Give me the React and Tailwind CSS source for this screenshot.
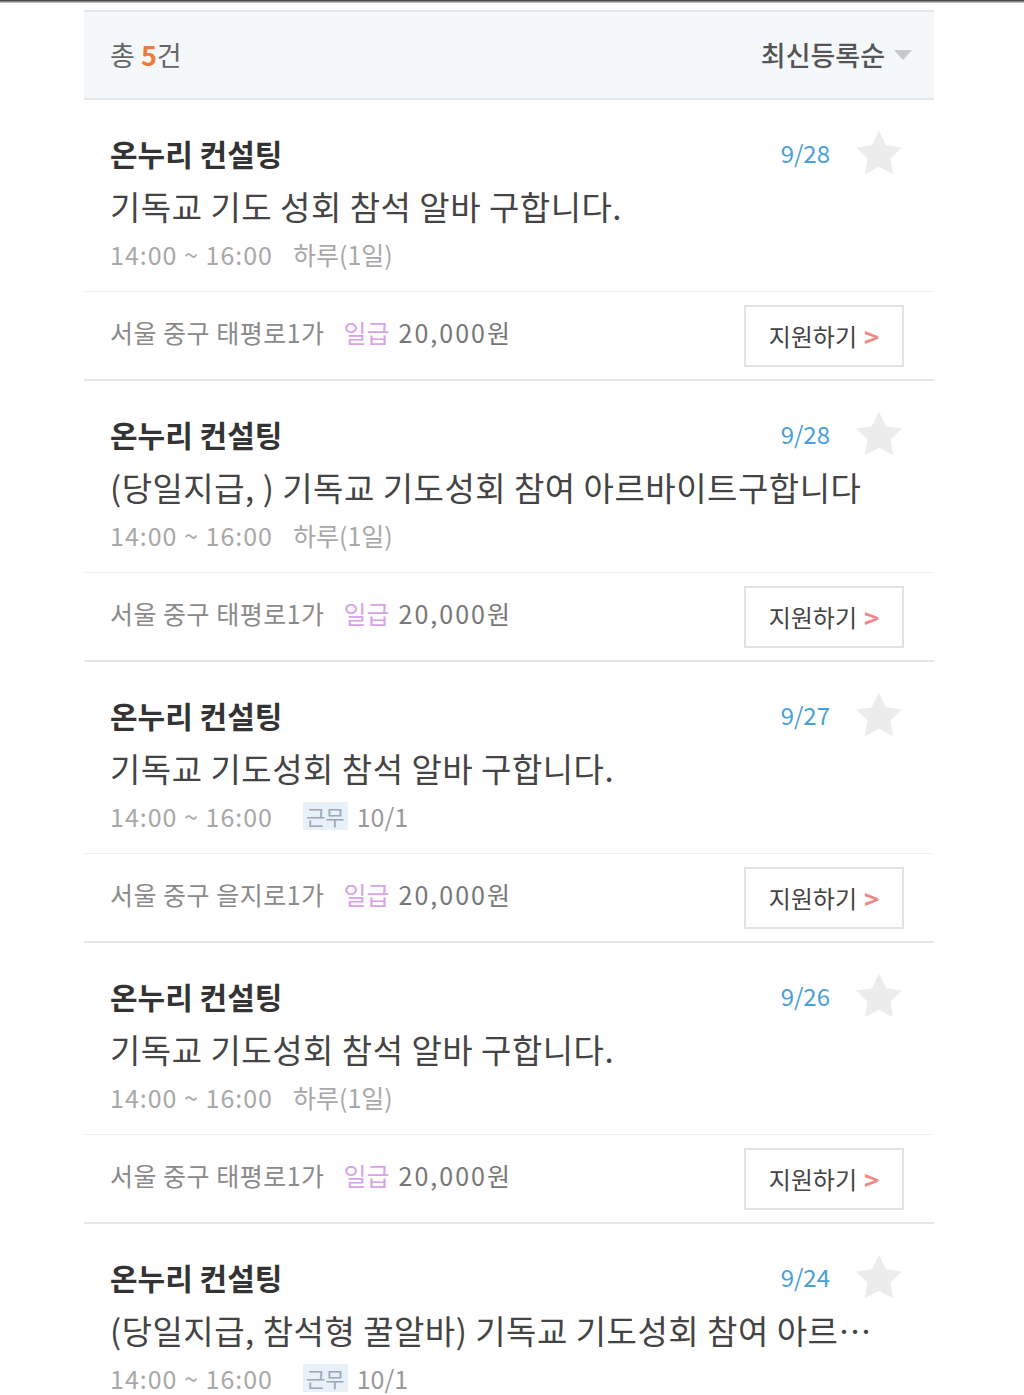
const jobs = [
  { date: "9/28", title: "기독교 기도 성회 참석 알바 구합니다.", kind: "day", place: "서울 중구 태평로1가" },
  { date: "9/28", title: "(당일지급, ) 기독교 기도성회 참여 아르바이트구합니다", kind: "day", place: "서울 중구 태평로1가" },
  { date: "9/27", title: "기독교 기도성회 참석 알바 구합니다.", kind: "work", place: "서울 중구 을지로1가" },
  { date: "9/26", title: "기독교 기도성회 참석 알바 구합니다.", kind: "day", place: "서울 중구 태평로1가" },
  { date: "9/24", title: "(당일지급, 참석형 꿀알바) 기독교 기도성회 참여 아르…", kind: "work", place: "서울 중구 태평로1가" },
]

function Star() {
  return (
    <svg width="50" height="48" viewBox="0 0 24 23" className="shrink-0">
      <path d="M12 0.8l3.4 7 7.6 1-5.5 5.3 1.3 7.6L12 18.1l-6.8 3.6 1.3-7.6L1 8.8l7.6-1z" fill="#ececec" />
    </svg>
  )
}

function JobItem({ job }) {
  return (
    <div className="border-b-2 border-[#e6e6e6]">
      <div className="h-[192px] border-b border-[#f0f0f0] pl-[26px] pr-[30px] pt-[36px]">
        <div className="flex items-center justify-between h-[34px]">
          <span className="text-[30px] leading-[36px] font-bold text-[#333]">온누리 컨설팅</span>
          <div className="flex items-center gap-[24px]">
            <span className="text-[24px] text-[#4a9fd8]">{job.date}</span>
            <Star />
          </div>
        </div>
        <div className="mt-[14px] text-[33px] leading-[44px] tracking-[0.5px] text-[#444] whitespace-nowrap">{job.title}</div>
        <div className="mt-[10px] flex items-center text-[25px] leading-[32px] text-[#a8a8a8]">
          <span className="tracking-[1px]">14:00 ~ 16:00</span>
          {job.kind === "day" ? (
            <span className="ml-[20px]">하루(1일)</span>
          ) : (
            <span className="ml-[30px] flex items-center">
              <span className="bg-[#e9f1f8] text-[#9aa8b8] text-[21px] leading-[28px] px-[3px]">근무</span>
              <span className="ml-[9px] text-[#999]">10/1</span>
            </span>
          )}
        </div>
      </div>
      <div className="h-[87px] flex items-center justify-between pl-[26px] pr-[30px]">
        <div className="text-[25px] flex items-center pb-[6px]">
          <span className="text-[#8a8a8a] tracking-[0.5px]">{job.place}</span>
          <span className="ml-[19px] text-[#d9a3ea]">일급</span>
          <span className="ml-[9px] text-[#777] tracking-[2px]">20,000원</span>
        </div>
        <button className="w-[160px] h-[62px] border-2 border-[#e3e3e3] bg-white flex items-center justify-center gap-[7px] text-[24px] text-[#444]">
          <span>지원하기</span>
          <span className="text-[#f08a8a] text-[26px] font-bold leading-none">&gt;</span>
        </button>
      </div>
    </div>
  )
}

export default function App() {
  return (
    <div className="w-[1024px] h-[1395px] overflow-hidden bg-white" style={{ fontFamily: '"Noto Sans CJK KR", "Noto Sans", sans-serif' }}>
      <div className="h-[3px] bg-gradient-to-b from-[#333] to-[#ddd]" />
      <div className="ml-[84px] w-[850px] mt-[7px]">
        <div className="h-[90px] bg-[#f5f8fb] border-t-2 border-b-2 border-[#e4e7ea] flex items-center justify-between pl-[26px] pr-[22px]">
          <span className="text-[27px] text-[#666]">총 <span className="text-[#f07a3a] font-bold">5</span>건</span>
          <span className="flex items-center gap-[9px] text-[27px] font-medium text-[#555]">
            최신등록순
            <svg width="18" height="10" viewBox="0 0 18 10"><path d="M0 0h18L9 10z" fill="#c8c8c8" /></svg>
          </span>
        </div>
        {jobs.map((job, i) => (
          <JobItem key={i} job={job} />
        ))}
      </div>
    </div>
  )
}
